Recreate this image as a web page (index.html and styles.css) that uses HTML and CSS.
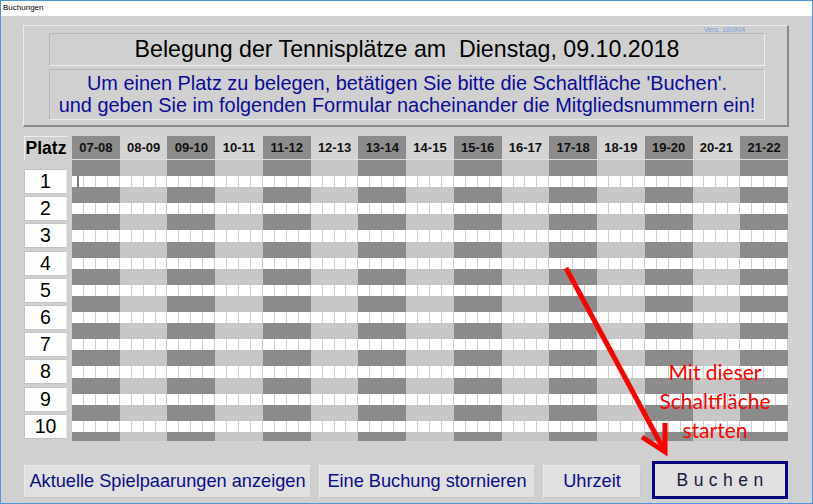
FILE: index.html
```html
<!DOCTYPE html>
<html lang="de">
<head>
<meta charset="utf-8">
<title>Buchungen</title>
<link rel="stylesheet" href="styles.css">
</head>
<body>
<div class="window">
  <div class="titlebar">Buchungen</div>
  <div class="client">
    <div class="panel">
      <span class="version">Vers. 180904</span>
      <div class="title-box">Belegung der Tennisplätze am&nbsp; Dienstag, 09.10.2018</div>
      <div class="info-box">Um einen Platz zu belegen, betätigen Sie bitte die Schaltfläche 'Buchen'.<br>und geben Sie im folgenden Formular nacheinander die Mitgliedsnummern ein!</div>
    </div>

    <div class="plan">
      <div class="labels">
        <div class="platz">Platz</div>
        <div class="nums">
          <div class="num">1</div>
          <div class="num">2</div>
          <div class="num">3</div>
          <div class="num">4</div>
          <div class="num">5</div>
          <div class="num">6</div>
          <div class="num">7</div>
          <div class="num">8</div>
          <div class="num">9</div>
          <div class="num">10</div>
        </div>
      </div>
      <div class="grid">
        <div class="hours">
          <div class="h dark">07-08</div>
          <div class="h light">08-09</div>
          <div class="h dark">09-10</div>
          <div class="h light">10-11</div>
          <div class="h dark">11-12</div>
          <div class="h light">12-13</div>
          <div class="h dark">13-14</div>
          <div class="h light">14-15</div>
          <div class="h dark">15-16</div>
          <div class="h light">16-17</div>
          <div class="h dark">17-18</div>
          <div class="h light">18-19</div>
          <div class="h dark">19-20</div>
          <div class="h light">20-21</div>
          <div class="h dark">21-22</div>
        </div>
        <div class="band"></div><div class="strip"><i class="caret"></i></div>
        <div class="band"></div><div class="strip"></div>
        <div class="band"></div><div class="strip"></div>
        <div class="band"></div><div class="strip"></div>
        <div class="band"></div><div class="strip"></div>
        <div class="band"></div><div class="strip"></div>
        <div class="band"></div><div class="strip"></div>
        <div class="band"></div><div class="strip"></div>
        <div class="band"></div><div class="strip"></div>
        <div class="band"></div><div class="strip"></div>
        <div class="band end"></div>
      </div>
    </div>

    <div class="buttons">
      <div class="btn b1">Aktuelle Spielpaarungen anzeigen</div>
      <div class="btn b2">Eine Buchung stornieren</div>
      <div class="btn b3">Uhrzeit</div>
      <div class="btn buchen">B u c h e n</div>
    </div>
  </div>

  <svg class="arrow" width="813" height="504" viewBox="0 0 813 504">
    <line x1="566" y1="268" x2="663" y2="448" stroke="#ff0000" stroke-width="5"/>
    <polyline points="665,423 665,452 642,437" fill="none" stroke="#ff0000" stroke-width="5" stroke-linejoin="miter"/>
  </svg>
  <div class="note">Mit dieser<br>Schaltfläche<br>starten</div>
</div>
</body>
</html>
```

FILE: styles.css
```css
* { box-sizing: border-box; }
html, body { margin: 0; padding: 0; }
body { width: 813px; height: 504px; overflow: hidden; background: #fff; font-family: "Liberation Sans", Arial, sans-serif; }

.window {
  position: relative;
  width: 813px;
  height: 504px;
  border: 1px solid #4f96dc;
  background: #d0d0d0;
  display: flex;
  flex-direction: column;
}

.titlebar {
  height: 15px;
  background: #fff;
  font-size: 8px;
  line-height: 13px;
  padding-left: 2px;
  color: #000;
  flex: none;
}

.client {
  flex: 1;
  background: #d0d0d0;
  display: flex;
  flex-direction: column;
}

.panel {
  position: relative;
  margin: 9px 0 0 22px;
  width: 766px;
  height: 102px;
  border-top: 1px solid #ededed;
  border-left: 1px solid #ededed;
  border-right: 2px solid #8a8a8a;
  border-bottom: 2px solid #8a8a8a;
  padding: 7px 0 0 25px;
  display: flex;
  flex-direction: column;
  gap: 3px;
}

.version {
  position: absolute;
  left: 680px;
  top: 0;
  font-size: 7px;
  color: #7d9fdc;
}

.title-box {
  width: 716px;
  height: 33px;
  border: 1px solid #b8b8b8;
  border-right-color: #ececec;
  border-bottom-color: #ececec;
  text-align: center;
  font-size: 23.2px;
  line-height: 31px;
  color: #000;
}

.info-box {
  width: 716px;
  height: 51px;
  border: 1px solid #b8b8b8;
  border-right-color: #ececec;
  border-bottom-color: #ececec;
  text-align: center;
  font-size: 19.9px;
  line-height: 22px;
  padding-top: 2px;
  color: #0b0b98;
}

.plan {
  margin-top: 9px;
  display: flex;
  gap: 5px;
  padding-left: 23px;
}

.labels { width: 43px; flex: none; }

.platz {
  height: 24px;
  border-top: 1px solid #eeeeee;
  border-left: 1px solid #eeeeee;
  text-align: center;
  font-weight: bold;
  font-size: 17.5px;
  line-height: 23px;
  color: #000;
}

.nums {
  margin-top: 9px;
  display: flex;
  flex-direction: column;
  gap: 2.2px;
}

.num {
  height: 25px;
  background: #fff;
  border: 1px solid #c4c4c4;
  border-right-color: #e8e8e8;
  text-align: center;
  font-size: 19.5px;
  line-height: 23px;
  color: #000;
}

.grid {
  width: 716px;
  display: flex;
  flex-direction: column;
}

.hours {
  display: grid;
  grid-template-columns: repeat(15, 1fr);
  height: 24px;
  border-bottom: 1px solid #dedede;
}

.h {
  text-align: center;
  font-weight: bold;
  font-size: 13px;
  line-height: 23px;
  color: #111;
}
.h.dark { background: #8c8c8c; }
.h.light { background: #d4d4d4; }

.band {
  height: 16px;
  background: repeating-linear-gradient(to right, #8b8b8b 0 47.733px, #c6c6c6 47.733px 95.467px);
}
.band.end { height: 9px; }

.strip {
  height: 11.2px;
  background: repeating-linear-gradient(to right, #ffffff 0 10.933px, #cfcfcf 10.933px 11.933px);
  display: flex;
}

.caret {
  display: block;
  width: 2px;
  height: 100%;
  margin-left: 5px;
  background: #7a7a7a;
}

.buttons {
  margin-top: 20px;
  padding-left: 23px;
  display: flex;
  align-items: flex-start;
}

.btn {
  height: 33px;
  margin-top: 4px;
  background: #e0e0e0;
  border: 1px solid #c9c9c9;
  border-top-color: #ececec;
  border-left-color: #ececec;
  text-align: center;
  font-size: 18.2px;
  line-height: 31px;
  color: #0c0c8a;
}
.b1 { width: 287px; }
.b2 { width: 216px; margin-left: 8px; }
.b3 { width: 98px; margin-left: 8px; }
.buchen {
  width: 136px;
  height: 38px;
  margin-top: 0;
  margin-left: 11px;
  border: 3px solid #06067a;
  background: #e0e0e0;
  font-size: 17.5px;
  line-height: 32px;
  color: #1a1a3c;
  letter-spacing: 0.3px;
}

.arrow {
  position: absolute;
  left: -1px;
  top: -1px;
  pointer-events: none;
}

.note {
  position: absolute;
  left: 639px;
  top: 356px;
  width: 150px;
  text-align: center;
  font-family: Lato, "Open Sans", sans-serif;
  font-size: 21px;
  line-height: 29px;
  color: #ff0000;
}
```
